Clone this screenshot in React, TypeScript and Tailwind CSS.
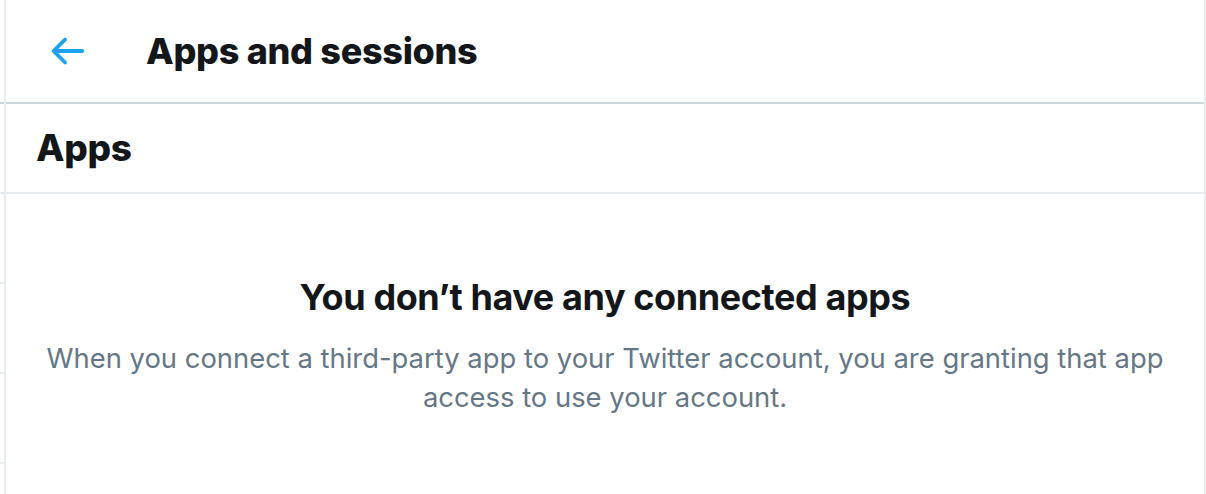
import React from "react";

const font = { fontFamily: "Inter, 'Noto Sans', sans-serif" };

function BackArrow() {
  return (
    <svg viewBox="0 0 24 24" className="w-[46px] h-[46px] fill-[#1da1f2]">
      <path d="M20 11H7.414l4.293-4.293c.39-.39.39-1.023 0-1.414s-1.023-.39-1.414 0l-6 6c-.39.39-.39 1.023 0 1.414l6 6c.195.195.45.293.707.293s.512-.098.707-.293c.39-.39.39-1.023 0-1.414L7.414 13H20c.553 0 1-.447 1-1s-.447-1-1-1z" />
    </svg>
  );
}

export default function App() {
  return (
    <div className="flex w-full h-[494px] bg-white overflow-hidden" style={font}>
      {/* edge of the column on the left */}
      <div className="w-[4px] flex flex-col shrink-0">
        <div className="h-[102px] border-b-2 border-[#ccd6dd] box-content" />
        <div className="h-[88px] border-b-2 border-[#e6ecf0] box-content" />
        <div className="h-[88px] border-b-2 border-[#e6ecf0] box-content" />
        <div className="h-[88px] border-b-2 border-[#e6ecf0] box-content" />
        <div className="h-[88px] border-b-2 border-[#e6ecf0] box-content" />
      </div>

      <div className="flex-1 flex flex-col border-x-2 border-[#e6ecf0]">
        <div className="h-[102px] box-content border-b-2 border-[#ccd6dd] flex items-center">
          <div className="w-[140px] pl-[38px] flex items-center">
            <BackArrow />
          </div>
          <h1 className="text-[36px] font-extrabold text-[#14171a] tracking-[-0.3px]">Apps and sessions</h1>
        </div>

        <div className="h-[88px] box-content border-b-2 border-[#e6ecf0] flex items-center px-[30px]">
          <h2 className="text-[37px] font-extrabold text-[#14171a] tracking-[-0.3px]">Apps</h2>
        </div>

        <div className="flex flex-col items-center px-[24px] pt-[81px] text-center">
          <div className="text-[36px] leading-[44px] font-bold text-[#14171a] tracking-[-0.4px]">
            You don’t have any connected apps
          </div>
          <p className="mt-[20px] text-[27.4px] leading-[39px] text-[#657786]">
            When you connect a third-party app to your Twitter account, you are granting that app access to use your account.
          </p>
        </div>
      </div>
    </div>
  );
}
